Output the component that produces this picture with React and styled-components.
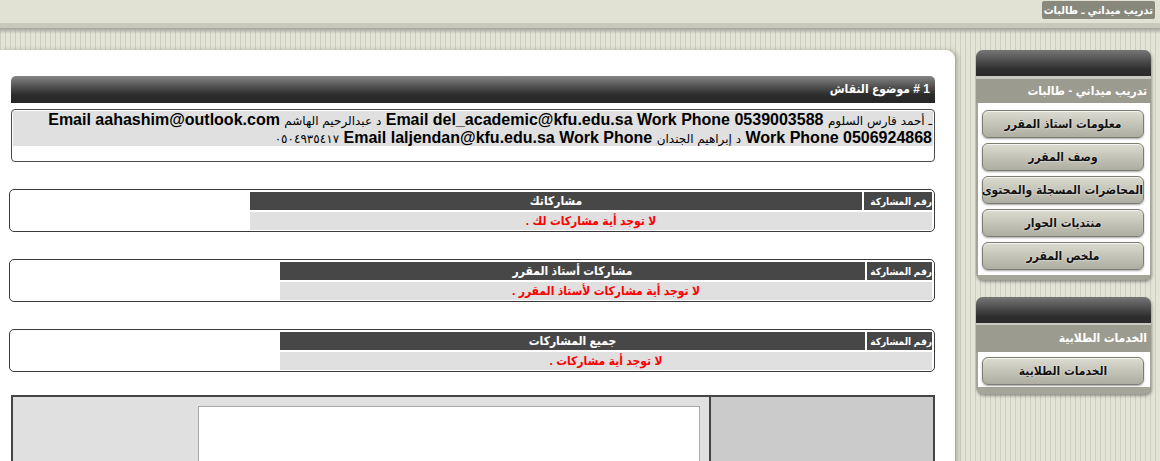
import React from 'react';
import styled, { createGlobalStyle } from 'styled-components';

const GlobalStyle = createGlobalStyle`
  html, body {
    margin: 0;
    padding: 0;
  }

  body {
    font-family: "Liberation Sans", "DejaVu Sans Condensed", "DejaVu Sans", sans-serif;
    background: #e2e2d6;
    overflow: hidden;
  }
`;

const Page = styled.div`
  width: 1160px;
  height: 461px;
  overflow: hidden;
  display: flex;
  flex-direction: column;
`;

const TopBar = styled.header`
  height: 23px;
  flex-shrink: 0;
  background: #e1e1d4;
  display: flex;
  justify-content: flex-end;
  align-items: flex-start;
  padding-right: 5px;
`;

const SiteLabel = styled.div`
  margin-top: 1px;
  height: 18px;
  line-height: 18px;
  padding: 0 2px;
  background: #88887d;
  color: #fff;
  font-size: 11px;
  font-weight: bold;
  border-radius: 2px;
  direction: rtl;
`;

const Band = styled.div`
  height: 5px;
  flex-shrink: 0;
  background: #c8c8bb;
`;

const Body = styled.div`
  flex: 1;
  display: flex;
  align-items: stretch;
  padding-top: 22px;
  background:
    linear-gradient(#a3a39c 0, rgba(210, 210, 200, 0) 6px),
    repeating-linear-gradient(90deg, #cdcdc0 0 1px, #e3e3d6 1px 5px);
`;

const Main = styled.main`
  width: 955px;
  flex-shrink: 0;
  box-sizing: border-box;
  background: #fff;
  border-top-right-radius: 9px;
  box-shadow: 3px 0 4px rgba(90, 90, 80, 0.35);
  padding: 26px 20px 0 11px;
`;

const TopicBar = styled.div`
  height: 27px;
  line-height: 27px;
  border-radius: 5px 5px 0 0;
  background: linear-gradient(#858585 0, #4a4a4a 45%, #2c2c2c 70%, #262626);
  color: #fff;
  font-size: 12px;
  font-weight: bold;
  text-align: right;
  padding-right: 5px;
`;

const InfoBox = styled.div`
  margin-top: 6px;
  border: 1px solid #4a4a4a;
  border-radius: 4px;
  padding: 1px 1px 15px;
`;

const InfoText = styled.div`
  background: #e0e0e0;
  direction: rtl;
  padding-right: 1px;
`;

const InfoLine = styled.div`
  height: 17.5px;
  line-height: 17.5px;
  white-space: nowrap;
  color: #000;
`;

const Contact = styled.bdi`
  font-size: 16px;
  font-weight: bold;
`;

const Name = styled.bdi`
  font-size: 12px;
  font-family: "DejaVu Sans", sans-serif;
  font-weight: normal;
`;

const PostBox = styled.div`
  margin: 27px 0 0 -2px;
  border: 1px solid #3a3a3a;
  border-radius: 5px;
  direction: rtl;
  height: 41px;
`;

const PostTable = styled.table`
  width: ${(p) => p.$width}px;
  border-spacing: 2px;
  table-layout: fixed;
`;

const HeadCell = styled.th`
  background: #474747;
  color: #fff;
  font-size: ${(p) => (p.$small ? 10 : 12)}px;
  font-weight: bold;
  height: 18px;
  padding: 0;
  width: ${(p) => (p.$w ? `${p.$w}px` : 'auto')};
  text-align: ${(p) => (p.$small ? 'right' : 'center')};
  white-space: nowrap;
  overflow: hidden;
`;

const EmptyCell = styled.td`
  background: #e0e0e0;
  color: #f00;
  font-size: 12px;
  font-weight: bold;
  height: 18px;
  padding: 0;
  text-align: center;
`;

const ReplyArea = styled.div`
  margin-top: 23px;
  border: 2px solid #454545;
  border-bottom: none;
  display: flex;
  height: 80px;
`;

const ReplyMain = styled.div`
  flex: 1;
  background: #e0e0e0;
  padding: 9px 9px 0 185px;
`;

const ReplyInput = styled.div`
  height: 100%;
  background: #fff;
  border: 1px solid #a8a8a8;
  border-bottom: none;
`;

const ReplySide = styled.div`
  width: 222px;
  background: #cbcbcb;
  border-left: 2px solid #454545;
`;

const Sidebar = styled.aside`
  width: 175px;
  margin-left: 21px;
  direction: rtl;
`;

const SideBox = styled.section`
  margin-top: ${(p) => p.$gap || 0}px;
  border-radius: 7px;
  overflow: hidden;
  background: #a5a599;
  box-shadow: 1px 2px 3px rgba(0, 0, 0, 0.35);
  padding-bottom: ${(p) => p.$foot}px;
`;

const SideHead = styled.div`
  height: 26px;
  background: linear-gradient(#777 0, #4a4a4a 45%, #2e2e2e 75%, #2a2a2a);
  border-bottom: ${(p) => p.$line}px solid #c9c9c1;
`;

const SideTitle = styled.div`
  height: ${(p) => p.$h}px;
  line-height: ${(p) => p.$h}px;
  background: #9b9b8f;
  color: #fff;
  font-size: 12px;
  font-weight: bold;
  padding-right: 4px;
`;

const SideList = styled.div`
  background: #fff;
  margin: 0 1px 0 2px;
  padding: ${(p) => p.$pad};
  display: flex;
  flex-direction: column;
  gap: 5px;
`;

const NavButton = styled.button`
  display: block;
  width: 100%;
  height: 28px;
  border: 1px solid #7c7c72;
  border-radius: 6px;
  background: linear-gradient(#dcdcd2 0, #c6c6ba 45%, #adada1 100%);
  box-shadow: inset 0 1px 0 rgba(255, 255, 255, 0.7), 0 1px 2px rgba(0, 0, 0, 0.35);
  font-family: "DejaVu Sans Condensed", "DejaVu Sans", sans-serif;
  font-size: 12px;
  font-weight: bold;
  color: #111;
  text-shadow: 0 0 2px #fff;
  white-space: nowrap;
  direction: rtl;
  padding: 0;
  cursor: pointer;
`;

const posts = [
  { width: 686, first: 68, title: 'مشاركاتك', empty: 'لا توجد أية مشاركات لك .' },
  { width: 656, first: 65, title: 'مشاركات أستاذ المقرر', empty: 'لا توجد أية مشاركات لأستاذ المقرر .' },
  { width: 656, first: 65, title: 'جميع المشاركات', empty: 'لا توجد أية مشاركات .' },
];

const courseLinks = [
  'معلومات استاذ المقرر',
  'وصف المقرر',
  'المحاضرات المسجلة والمحتوى',
  'منتديات الحوار',
  'ملخص المقرر',
];

const App = () => {
  return (
    <Page>
      <GlobalStyle />
      <TopBar>
        <SiteLabel>تدريب ميداني ـ طالبات</SiteLabel>
      </TopBar>
      <Band />
      <Body>
        <Main>
          <TopicBar>
            موضوع النقاش <bdi># 1</bdi>
          </TopicBar>
          <InfoBox>
            <InfoText>
              <InfoLine>
                <Name>ـ أحمد فارس السلوم</Name>{' '}
                <Contact>Email del_academic@kfu.edu.sa Work Phone 0539003588</Contact>{' '}
                <Name>د عبدالرحيم الهاشم</Name>{' '}
                <Contact>Email aahashim@outlook.com</Contact>
              </InfoLine>
              <InfoLine>
                <Contact>Work Phone 0506924868</Contact>{' '}
                <Name>د إبراهيم الجندان</Name>{' '}
                <Contact>Email laljendan@kfu.edu.sa Work Phone</Contact>{' '}
                <Name>٠٥٠٤٩٣٥٤١٧</Name>
              </InfoLine>
            </InfoText>
          </InfoBox>

          {posts.map((p) => (
            <PostBox key={p.title}>
              <PostTable $width={p.width}>
                <tbody>
                  <tr>
                    <HeadCell $w={p.first} $small>رقم المشاركة</HeadCell>
                    <HeadCell>{p.title}</HeadCell>
                  </tr>
                  <tr>
                    <EmptyCell colSpan={2}>{p.empty}</EmptyCell>
                  </tr>
                </tbody>
              </PostTable>
            </PostBox>
          ))}

          <ReplyArea>
            <ReplyMain>
              <ReplyInput />
            </ReplyMain>
            <ReplySide />
          </ReplyArea>
        </Main>

        <Sidebar>
          <SideBox $foot={5}>
            <SideHead $line={3} />
            <SideTitle $h={24}>تدريب ميداني - طالبات</SideTitle>
            <SideList $pad="7px 6px 5px 4px">
              {courseLinks.map((l) => (
                <NavButton key={l} type="button">{l}</NavButton>
              ))}
            </SideList>
          </SideBox>
          <SideBox $gap={17} $foot={7}>
            <SideHead $line={2} />
            <SideTitle $h={27}>الخدمات الطلابية</SideTitle>
            <SideList $pad="5px 6px 2px 4px">
              <NavButton type="button">الخدمات الطلابية</NavButton>
            </SideList>
          </SideBox>
        </Sidebar>
      </Body>
    </Page>
  );
};

export default App;
